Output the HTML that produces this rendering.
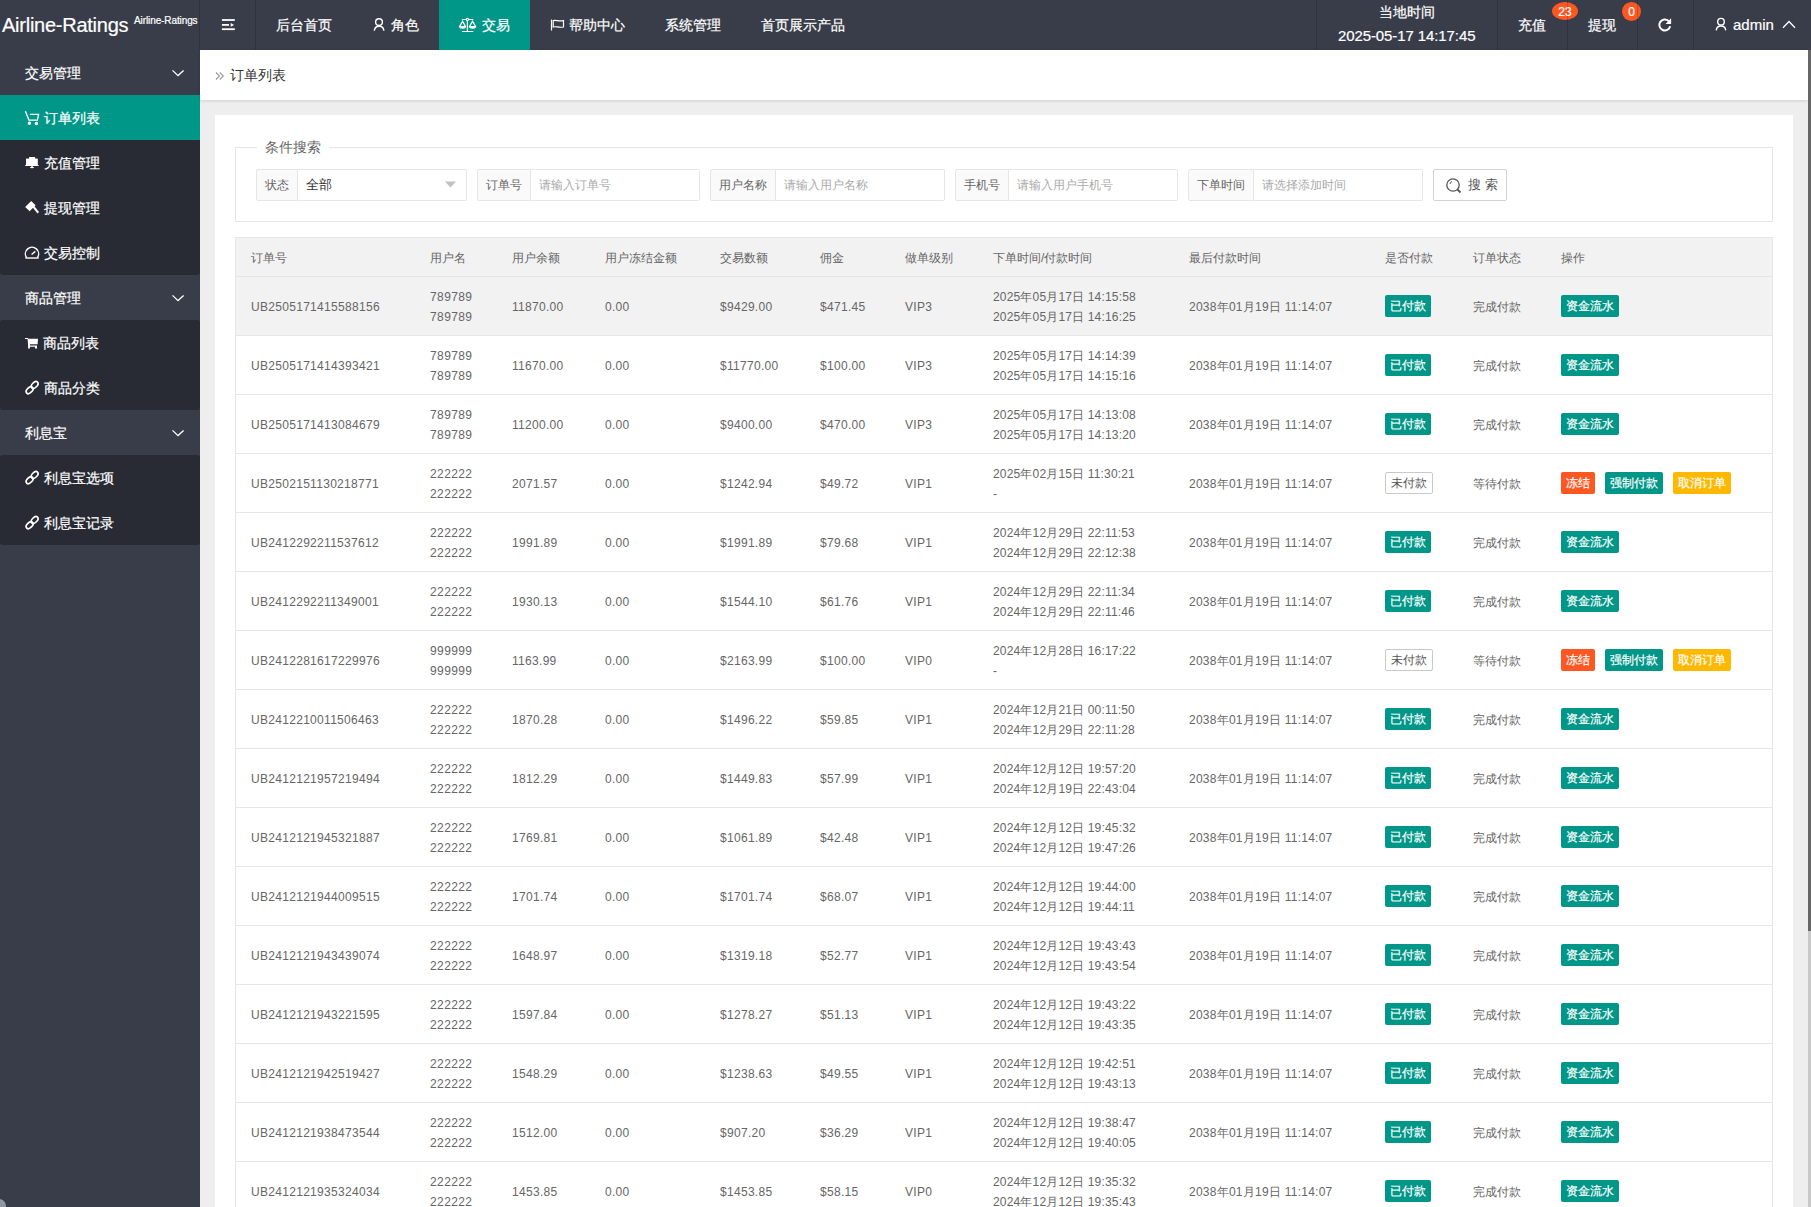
<!DOCTYPE html>
<html><head><meta charset="utf-8"><title>订单列表</title><style>*{margin:0;padding:0;box-sizing:border-box}
html,body{width:1811px;height:1207px;overflow:hidden;background:#eeeeee;font-family:"Liberation Sans",sans-serif;color:#666;font-size:12px}
svg{position:absolute;overflow:visible}
.header{-webkit-text-stroke:0.2px #fff;position:absolute;left:0;top:0;width:1811px;height:50px;background:#393D49;color:#fff}
.big{position:absolute;left:2px;top:13px;font-size:20px;line-height:24px;color:#fff;white-space:nowrap;letter-spacing:-0.25px}
.sm{position:absolute;left:134px;top:15px;font-size:10px;line-height:12px;color:#fff;white-space:nowrap;letter-spacing:-0.1px}
.vl{position:absolute;top:0;width:1px;height:50px;background:rgba(0,0,0,.16)}
.nav{position:absolute;top:0;height:50px;line-height:50px;font-size:14px;color:#fff;white-space:nowrap}
.navact{position:absolute;left:439px;top:0;width:91px;height:50px;background:#009688}
.side{-webkit-text-stroke:0.2px #fff;position:absolute;left:0;top:50px;width:200px;height:1157px;background:#393D49}
.si{position:absolute;left:0;width:200px;height:45px;line-height:45px;color:#fff;font-size:14px;white-space:nowrap}
.si.par{background:#393D49}
.grp{position:absolute;left:0;width:200px;background:#282B33;border-radius:3px}
.si.act{background:#009688}
.si .t{position:absolute;left:25px;top:1px}
.si .ti{position:absolute;left:44px;top:1px}
.bc{position:absolute;left:200px;top:50px;width:1608px;height:50px;background:#fff;box-shadow:0 1px 3px rgba(0,0,0,.13)}
.card{position:absolute;left:215px;top:115px;width:1578px;height:1100px;background:#fff}
.fs{position:absolute;left:235px;top:147px;width:1538px;height:75px;border:1px solid #e6e6e6}
.legend{position:absolute;left:257px;top:138px;padding:0 8px;background:#fff;font-size:14px;color:#666;line-height:18px}
.lab{position:absolute;top:169px;height:32px;line-height:30px;border:1px solid #e6e6e6;border-radius:2px 0 0 2px;background:#fafafa;font-size:12px;color:#666;padding-left:8px;white-space:nowrap}
.inp{position:absolute;top:169px;height:32px;line-height:30px;border:1px solid #e6e6e6;border-left:none;border-radius:0 2px 2px 0;background:#fff;font-size:12px;color:#aaa;padding-left:8px;white-space:nowrap}
.sbtn{position:absolute;left:1433px;top:169px;width:74px;height:32px;border:1px solid #d2d2d2;border-radius:2px;background:#fff;color:#555;font-size:13px;line-height:30px}
.table{position:absolute;left:235px;top:237px;width:1538px;border-left:1px solid #e6e6e6;border-right:1px solid #e6e6e6}
.th{position:relative;height:40px;background:#f2f2f2;border-bottom:1px solid #e6e6e6;border-top:1px solid #e6e6e6}
.th .c{position:absolute;top:1px;line-height:38px;font-size:12px;color:#666;white-space:nowrap}
.tr{position:relative;height:59px;border-bottom:1px solid #e6e6e6;background:#fff}
.tr.hov{background:#f2f2f2}
.tr .c{position:absolute;top:1px;line-height:58px;white-space:nowrap;font-size:12px;color:#666;letter-spacing:0.3px}
.tr .c.cn{letter-spacing:0}
.tr .c.two{line-height:20px;top:10px;letter-spacing:0.17px}
.btn{position:absolute;top:18px;height:22px;line-height:22px;padding:0 5px;font-size:12px;color:#fff;white-space:nowrap;border-radius:2px}
.btn.g,.btn.o,.btn.y{-webkit-text-stroke:0.2px #fff}
.btn.g{background:#009688}
.btn.o{background:#FF5722}
.btn.y{background:#FFB800}
.btn.p{top:195px;background:#fff;color:#555;border:1px solid #c9c9c9;line-height:20px;top:18px;height:22px}
.badge{position:absolute;top:2px;height:18px;line-height:20px;border-radius:50%;background:#FF5722;color:#fff;font-size:12px;text-align:center}
.scroll{position:absolute;left:1808px;top:50px;width:3px;height:1157px;background:#c8c8c8}
.thumb{position:absolute;left:1808px;top:50px;width:3px;height:881px;background:#666}
</style></head>
<body><div class="header">
  <span class="big">Airline-Ratings</span><span class="sm">Airline-Ratings</span>
  <div class="vl" style="left:199px"></div>
  <svg style="left:215px;top:12px" width="30" height="26" viewBox="0 0 30 26"><rect x="6.9" y="7.1" width="12.9" height="1.8" fill="#fff"/><rect x="6.9" y="12" width="7.1" height="1.8" fill="#fff"/><polygon points="15.7,11.1 19.1,12.9 15.7,14.7" fill="#fff"/><rect x="6.9" y="16.3" width="12.9" height="1.8" fill="#fff"/></svg>
  <div class="vl" style="left:255px"></div>
  <div class="navact"></div>
  <div class="nav" style="left:276px">后台首页</div>
  <svg style="left:365px;top:12px" width="30" height="26" viewBox="0 0 30 26" fill="none" stroke="#fff" stroke-width="1.4"><circle cx="14" cy="10.1" r="3.4"/><path d="M9.3 18.8 C9.6 15.6 11.6 14.2 14.1 14.2 C16.6 14.2 18.6 15.6 18.9 18.8"/></svg>
  <div class="nav" style="left:391px">角色</div>
  <svg style="left:452px;top:12px" width="30" height="26" viewBox="0 0 30 26" fill="none" stroke="#fff" stroke-width="1.2"><path d="M9.9 7.5 H14.2 M16.6 7.5 H21.3"/><circle cx="15.4" cy="7.4" r="1.1"/><path d="M15.4 8.5 V19.5 M9.9 19.5 H21.3"/><path d="M7.4 14.9 L10.6 9.3 L13.7 14.9" /><path d="M17.3 14.9 L20.6 9.3 L23.8 14.9"/><path d="M7.3 14.6 H13.8 C13.8 16.9 7.3 16.9 7.3 14.6 Z" fill="#fff" stroke-width="1"/><path d="M17.3 14.6 H23.8 C23.8 16.9 17.3 16.9 17.3 14.6 Z" fill="#fff" stroke-width="1"/></svg>
  <div class="nav" style="left:482px">交易</div>
  <svg style="left:543px;top:12px" width="30" height="26" viewBox="0 0 30 26" fill="none" stroke="#fff" stroke-width="1.2"><path d="M8.5 7.6 V18.5"/><path d="M10.2 8.6 C13 7.6 15.5 9.6 20.5 8.6 V15 C15.5 16 13 14 10.2 15 Z"/></svg>
  <div class="nav" style="left:569px">帮助中心</div>
  <div class="nav" style="left:665px">系统管理</div>
  <div class="nav" style="left:761px">首页展示产品</div>
  <div class="vl" style="left:1316px"></div>
  <div class="nav" style="left:1379px;top:0;line-height:24px;font-size:14px">当地时间</div>
  <div class="nav" style="left:1338px;top:26px;line-height:20px;font-size:15px;letter-spacing:-0.1px">2025-05-17 14:17:45</div>
  <div class="vl" style="left:1497px"></div>
  <div class="nav" style="left:1518px">充值</div>
  <span class="badge" style="left:1552px;width:26px">23</span>
  <div class="vl" style="left:1567px"></div>
  <div class="nav" style="left:1588px">提现</div>
  <span class="badge" style="left:1622px;width:19px;height:19px">0</span>
  <div class="vl" style="left:1637px"></div>
  <svg style="left:1650px;top:12px" width="30" height="26" viewBox="0 0 30 26" fill="none" stroke="#fff" stroke-width="2"><path d="M20.2 14.2 A5.5 5.5 0 1 1 18.6 8.9"/><polygon points="21.1,6.2 21.1,11.9 15.6,11.9" fill="#fff" stroke="none"/></svg>
  <div class="vl" style="left:1693px"></div>
  <svg style="left:1705px;top:10px" width="30" height="30" viewBox="0 0 30 30" fill="none" stroke="#fff" stroke-width="1.4"><circle cx="16" cy="11.7" r="3.3"/><path d="M11.3 20.4 C11.5 17.4 13.3 16 16 16 C18.7 16 20.5 17.4 20.7 20.4"/></svg>
  <div class="nav" style="left:1733px;font-size:15px;top:0">admin</div>
  <svg style="left:1780px;top:18px" width="18" height="14" viewBox="0 0 18 14" fill="none" stroke="#fff" stroke-width="1.3"><path d="M3 9.7 L9 3.5 L15 9.7"/></svg>
</div>
<div class="side">
  <div class="si par" style="top:0"><span class="t">交易管理</span></div>
  <svg style="left:165px;top:10px" width="25" height="25" viewBox="0 0 25 25" fill="none" stroke="#fff" stroke-width="1.3"><path d="M7.5 10.4 L13 15.6 L18.6 10.4"/></svg>
  <div class="grp" style="top:45px;height:180px"></div>
  <div class="si act" style="top:45px"><span class="ti">订单列表</span></div>
  <svg style="left:20px;top:55px" width="25" height="25" viewBox="0 0 25 25" fill="none" stroke="#fff" stroke-width="1.3"><path d="M5.4 6.2 L8.9 15.1 H17.4 L18.6 9.4 H10"/><circle cx="9.4" cy="18.2" r="1.1" fill="#fff"/><circle cx="16.4" cy="18.4" r="1.1" fill="#fff"/></svg>
  <div class="si" style="top:90px"><span class="ti">充值管理</span></div>
  <svg style="left:20px;top:100px" width="25" height="25" viewBox="0 0 25 25" fill="#fff"><rect x="9.1" y="7" width="6" height="2"/><rect x="6" y="8.6" width="11.8" height="6.6"/><rect x="5.2" y="15" width="13.4" height="1"/><rect x="11.3" y="15.5" width="1.4" height="1.6"/><ellipse cx="12" cy="17.6" rx="2.1" ry="0.75"/></svg>
  <div class="si" style="top:135px"><span class="ti">提现管理</span></div>
  <svg style="left:20px;top:145px" width="25" height="25" viewBox="0 0 25 25" fill="#fff"><polygon points="11.2,5.9 15.6,10.3 9.6,16.3 5.2,11.9"/><polygon points="12.3,12 13.8,10.5 19,16.9 17.5,18.4" /></svg>
  <div class="si" style="top:180px"><span class="ti">交易控制</span></div>
  <svg style="left:20px;top:190px" width="25" height="25" viewBox="0 0 25 25" fill="none" stroke="#fff" stroke-width="1.4"><path d="M6.5 17.5 A6.6 6.6 0 1 1 17.5 17.5"/><path d="M5.3 18 H18.7"/><path d="M11.6 14.5 L15.3 11.4"/></svg>
  <div class="si par" style="top:225px"><span class="t">商品管理</span></div>
  <svg style="left:165px;top:235px" width="25" height="25" viewBox="0 0 25 25" fill="none" stroke="#fff" stroke-width="1.3"><path d="M7.5 10.4 L13 15.6 L18.6 10.4"/></svg>
  <div class="grp" style="top:270px;height:90px"></div>
  <div class="si" style="top:270px"><span class="ti" style="left:43px">商品列表</span></div>
  <svg style="left:20px;top:280px" width="25" height="25" viewBox="0 0 25 25" fill="#fff"><path d="M5 8 H7.9 L8.4 8.8 H18 L17.6 14.3 H9.9 V15.6 H17 V18.6 H15 V16.7 H9.9 V18.6 H8.1 V15.6 L7.6 9 H5 Z"/></svg>
  <div class="si" style="top:315px"><span class="ti">商品分类</span></div>
  <svg style="left:20px;top:325px" width="25" height="25" viewBox="0 0 25 25" fill="none" stroke="#fff" stroke-width="1.7"><ellipse cx="9.6" cy="15.2" rx="4.1" ry="2.5" transform="rotate(-45 9.6 15.2)"/><ellipse cx="14.6" cy="10" rx="4.1" ry="2.5" transform="rotate(-45 14.6 10)"/></svg>
  <div class="si par" style="top:360px"><span class="t">利息宝</span></div>
  <svg style="left:165px;top:370px" width="25" height="25" viewBox="0 0 25 25" fill="none" stroke="#fff" stroke-width="1.3"><path d="M7.5 10.4 L13 15.6 L18.6 10.4"/></svg>
  <div class="grp" style="top:405px;height:90px"></div>
  <div class="si" style="top:405px"><span class="ti">利息宝选项</span></div>
  <svg style="left:20px;top:415px" width="25" height="25" viewBox="0 0 25 25" fill="none" stroke="#fff" stroke-width="1.7"><ellipse cx="9.6" cy="15.2" rx="4.1" ry="2.5" transform="rotate(-45 9.6 15.2)"/><ellipse cx="14.6" cy="10" rx="4.1" ry="2.5" transform="rotate(-45 14.6 10)"/></svg>
  <div class="si" style="top:450px"><span class="ti">利息宝记录</span></div>
  <svg style="left:20px;top:460px" width="25" height="25" viewBox="0 0 25 25" fill="none" stroke="#fff" stroke-width="1.7"><ellipse cx="9.6" cy="15.2" rx="4.1" ry="2.5" transform="rotate(-45 9.6 15.2)"/><ellipse cx="14.6" cy="10" rx="4.1" ry="2.5" transform="rotate(-45 14.6 10)"/></svg>
  <div style="position:absolute;left:-8px;top:1149px;width:14px;height:14px;border-radius:50%;background:#8e98a3"></div>
</div>
<div class="bc">
  <svg style="left:13px;top:20px" width="14" height="14" viewBox="0 0 14 14" fill="none" stroke="#999" stroke-width="1.1"><path d="M3 2.5 L6.5 6 L3 9.5 M6.8 2.5 L10.3 6 L6.8 9.5"/></svg>
  <span style="position:absolute;left:30px;top:15px;color:#333;font-size:14px;line-height:20px">订单列表</span>
</div>
<div class="card"></div>
<div class="fs"></div>
<div class="legend">条件搜索</div>
<div class="lab" style="left:256px;width:42px">状态</div>
<div class="inp" style="left:298px;width:169px;color:#333;font-size:13px">全部</div>
<svg style="left:440px;top:178px" width="20" height="14" viewBox="0 0 20 14"><polygon points="5,3.6 16,3.6 10.5,9.6" fill="#c2c2c2"/></svg>
<div class="lab" style="left:477px;width:54px">订单号</div>
<div class="inp" style="left:531px;width:169px">请输入订单号</div>
<div class="lab" style="left:710px;width:66px">用户名称</div>
<div class="inp" style="left:776px;width:169px">请输入用户名称</div>
<div class="lab" style="left:955px;width:54px">手机号</div>
<div class="inp" style="left:1009px;width:169px">请输入用户手机号</div>
<div class="lab" style="left:1188px;width:66px">下单时间</div>
<div class="inp" style="left:1254px;width:169px">请选择添加时间</div>
<div class="sbtn">
  <svg style="left:10px;top:6px" width="20" height="20" viewBox="0 0 20 20" fill="none" stroke="#555" stroke-width="1.3"><circle cx="9" cy="9" r="6.2"/><path d="M13.5 13.5 L16.5 16.5" stroke-width="1.8"/><path d="M6 8 A3 3 0 0 1 8 5.5" stroke-width="1"/></svg>
  <span style="position:absolute;left:34px;top:0">搜 索</span>
</div>
<div class="table"><div class="th"><span class="c" style="left:15px">订单号</span><span class="c" style="left:194px">用户名</span><span class="c" style="left:276px">用户余额</span><span class="c" style="left:369px">用户冻结金额</span><span class="c" style="left:484px">交易数额</span><span class="c" style="left:584px">佣金</span><span class="c" style="left:669px">做单级别</span><span class="c" style="left:757px">下单时间/付款时间</span><span class="c" style="left:953px">最后付款时间</span><span class="c" style="left:1149px">是否付款</span><span class="c" style="left:1237px">订单状态</span><span class="c" style="left:1325px">操作</span></div><div class="tr hov"><span class="c" style="left:15px">UB2505171415588156</span><span class="c two" style="left:194px;letter-spacing:0.4px">789789<br>789789</span><span class="c" style="left:276px">11870.00</span><span class="c" style="left:369px">0.00</span><span class="c" style="left:484px">$9429.00</span><span class="c" style="left:584px">$471.45</span><span class="c" style="left:669px">VIP3</span><span class="c two" style="left:757px">2025年05月17日 14:15:58<br>2025年05月17日 14:16:25</span><span class="c" style="left:953px;letter-spacing:0.25px">2038年01月19日 11:14:07</span><span class="btn g" style="left:1149px">已付款</span><span class="c cn" style="left:1237px">完成付款</span><span class="btn g" style="left:1325px">资金流水</span></div><div class="tr"><span class="c" style="left:15px">UB2505171414393421</span><span class="c two" style="left:194px;letter-spacing:0.4px">789789<br>789789</span><span class="c" style="left:276px">11670.00</span><span class="c" style="left:369px">0.00</span><span class="c" style="left:484px">$11770.00</span><span class="c" style="left:584px">$100.00</span><span class="c" style="left:669px">VIP3</span><span class="c two" style="left:757px">2025年05月17日 14:14:39<br>2025年05月17日 14:15:16</span><span class="c" style="left:953px;letter-spacing:0.25px">2038年01月19日 11:14:07</span><span class="btn g" style="left:1149px">已付款</span><span class="c cn" style="left:1237px">完成付款</span><span class="btn g" style="left:1325px">资金流水</span></div><div class="tr"><span class="c" style="left:15px">UB2505171413084679</span><span class="c two" style="left:194px;letter-spacing:0.4px">789789<br>789789</span><span class="c" style="left:276px">11200.00</span><span class="c" style="left:369px">0.00</span><span class="c" style="left:484px">$9400.00</span><span class="c" style="left:584px">$470.00</span><span class="c" style="left:669px">VIP3</span><span class="c two" style="left:757px">2025年05月17日 14:13:08<br>2025年05月17日 14:13:20</span><span class="c" style="left:953px;letter-spacing:0.25px">2038年01月19日 11:14:07</span><span class="btn g" style="left:1149px">已付款</span><span class="c cn" style="left:1237px">完成付款</span><span class="btn g" style="left:1325px">资金流水</span></div><div class="tr"><span class="c" style="left:15px">UB2502151130218771</span><span class="c two" style="left:194px;letter-spacing:0.4px">222222<br>222222</span><span class="c" style="left:276px">2071.57</span><span class="c" style="left:369px">0.00</span><span class="c" style="left:484px">$1242.94</span><span class="c" style="left:584px">$49.72</span><span class="c" style="left:669px">VIP1</span><span class="c two" style="left:757px">2025年02月15日 11:30:21<br>-</span><span class="c" style="left:953px;letter-spacing:0.25px">2038年01月19日 11:14:07</span><span class="btn p" style="left:1149px">未付款</span><span class="c cn" style="left:1237px">等待付款</span><span class="btn o" style="left:1325px">冻结</span><span class="btn g" style="left:1369px">强制付款</span><span class="btn y" style="left:1437px">取消订单</span></div><div class="tr"><span class="c" style="left:15px">UB2412292211537612</span><span class="c two" style="left:194px;letter-spacing:0.4px">222222<br>222222</span><span class="c" style="left:276px">1991.89</span><span class="c" style="left:369px">0.00</span><span class="c" style="left:484px">$1991.89</span><span class="c" style="left:584px">$79.68</span><span class="c" style="left:669px">VIP1</span><span class="c two" style="left:757px">2024年12月29日 22:11:53<br>2024年12月29日 22:12:38</span><span class="c" style="left:953px;letter-spacing:0.25px">2038年01月19日 11:14:07</span><span class="btn g" style="left:1149px">已付款</span><span class="c cn" style="left:1237px">完成付款</span><span class="btn g" style="left:1325px">资金流水</span></div><div class="tr"><span class="c" style="left:15px">UB2412292211349001</span><span class="c two" style="left:194px;letter-spacing:0.4px">222222<br>222222</span><span class="c" style="left:276px">1930.13</span><span class="c" style="left:369px">0.00</span><span class="c" style="left:484px">$1544.10</span><span class="c" style="left:584px">$61.76</span><span class="c" style="left:669px">VIP1</span><span class="c two" style="left:757px">2024年12月29日 22:11:34<br>2024年12月29日 22:11:46</span><span class="c" style="left:953px;letter-spacing:0.25px">2038年01月19日 11:14:07</span><span class="btn g" style="left:1149px">已付款</span><span class="c cn" style="left:1237px">完成付款</span><span class="btn g" style="left:1325px">资金流水</span></div><div class="tr"><span class="c" style="left:15px">UB2412281617229976</span><span class="c two" style="left:194px;letter-spacing:0.4px">999999<br>999999</span><span class="c" style="left:276px">1163.99</span><span class="c" style="left:369px">0.00</span><span class="c" style="left:484px">$2163.99</span><span class="c" style="left:584px">$100.00</span><span class="c" style="left:669px">VIP0</span><span class="c two" style="left:757px">2024年12月28日 16:17:22<br>-</span><span class="c" style="left:953px;letter-spacing:0.25px">2038年01月19日 11:14:07</span><span class="btn p" style="left:1149px">未付款</span><span class="c cn" style="left:1237px">等待付款</span><span class="btn o" style="left:1325px">冻结</span><span class="btn g" style="left:1369px">强制付款</span><span class="btn y" style="left:1437px">取消订单</span></div><div class="tr"><span class="c" style="left:15px">UB2412210011506463</span><span class="c two" style="left:194px;letter-spacing:0.4px">222222<br>222222</span><span class="c" style="left:276px">1870.28</span><span class="c" style="left:369px">0.00</span><span class="c" style="left:484px">$1496.22</span><span class="c" style="left:584px">$59.85</span><span class="c" style="left:669px">VIP1</span><span class="c two" style="left:757px">2024年12月21日 00:11:50<br>2024年12月29日 22:11:28</span><span class="c" style="left:953px;letter-spacing:0.25px">2038年01月19日 11:14:07</span><span class="btn g" style="left:1149px">已付款</span><span class="c cn" style="left:1237px">完成付款</span><span class="btn g" style="left:1325px">资金流水</span></div><div class="tr"><span class="c" style="left:15px">UB2412121957219494</span><span class="c two" style="left:194px;letter-spacing:0.4px">222222<br>222222</span><span class="c" style="left:276px">1812.29</span><span class="c" style="left:369px">0.00</span><span class="c" style="left:484px">$1449.83</span><span class="c" style="left:584px">$57.99</span><span class="c" style="left:669px">VIP1</span><span class="c two" style="left:757px">2024年12月12日 19:57:20<br>2024年12月19日 22:43:04</span><span class="c" style="left:953px;letter-spacing:0.25px">2038年01月19日 11:14:07</span><span class="btn g" style="left:1149px">已付款</span><span class="c cn" style="left:1237px">完成付款</span><span class="btn g" style="left:1325px">资金流水</span></div><div class="tr"><span class="c" style="left:15px">UB2412121945321887</span><span class="c two" style="left:194px;letter-spacing:0.4px">222222<br>222222</span><span class="c" style="left:276px">1769.81</span><span class="c" style="left:369px">0.00</span><span class="c" style="left:484px">$1061.89</span><span class="c" style="left:584px">$42.48</span><span class="c" style="left:669px">VIP1</span><span class="c two" style="left:757px">2024年12月12日 19:45:32<br>2024年12月12日 19:47:26</span><span class="c" style="left:953px;letter-spacing:0.25px">2038年01月19日 11:14:07</span><span class="btn g" style="left:1149px">已付款</span><span class="c cn" style="left:1237px">完成付款</span><span class="btn g" style="left:1325px">资金流水</span></div><div class="tr"><span class="c" style="left:15px">UB2412121944009515</span><span class="c two" style="left:194px;letter-spacing:0.4px">222222<br>222222</span><span class="c" style="left:276px">1701.74</span><span class="c" style="left:369px">0.00</span><span class="c" style="left:484px">$1701.74</span><span class="c" style="left:584px">$68.07</span><span class="c" style="left:669px">VIP1</span><span class="c two" style="left:757px">2024年12月12日 19:44:00<br>2024年12月12日 19:44:11</span><span class="c" style="left:953px;letter-spacing:0.25px">2038年01月19日 11:14:07</span><span class="btn g" style="left:1149px">已付款</span><span class="c cn" style="left:1237px">完成付款</span><span class="btn g" style="left:1325px">资金流水</span></div><div class="tr"><span class="c" style="left:15px">UB2412121943439074</span><span class="c two" style="left:194px;letter-spacing:0.4px">222222<br>222222</span><span class="c" style="left:276px">1648.97</span><span class="c" style="left:369px">0.00</span><span class="c" style="left:484px">$1319.18</span><span class="c" style="left:584px">$52.77</span><span class="c" style="left:669px">VIP1</span><span class="c two" style="left:757px">2024年12月12日 19:43:43<br>2024年12月12日 19:43:54</span><span class="c" style="left:953px;letter-spacing:0.25px">2038年01月19日 11:14:07</span><span class="btn g" style="left:1149px">已付款</span><span class="c cn" style="left:1237px">完成付款</span><span class="btn g" style="left:1325px">资金流水</span></div><div class="tr"><span class="c" style="left:15px">UB2412121943221595</span><span class="c two" style="left:194px;letter-spacing:0.4px">222222<br>222222</span><span class="c" style="left:276px">1597.84</span><span class="c" style="left:369px">0.00</span><span class="c" style="left:484px">$1278.27</span><span class="c" style="left:584px">$51.13</span><span class="c" style="left:669px">VIP1</span><span class="c two" style="left:757px">2024年12月12日 19:43:22<br>2024年12月12日 19:43:35</span><span class="c" style="left:953px;letter-spacing:0.25px">2038年01月19日 11:14:07</span><span class="btn g" style="left:1149px">已付款</span><span class="c cn" style="left:1237px">完成付款</span><span class="btn g" style="left:1325px">资金流水</span></div><div class="tr"><span class="c" style="left:15px">UB2412121942519427</span><span class="c two" style="left:194px;letter-spacing:0.4px">222222<br>222222</span><span class="c" style="left:276px">1548.29</span><span class="c" style="left:369px">0.00</span><span class="c" style="left:484px">$1238.63</span><span class="c" style="left:584px">$49.55</span><span class="c" style="left:669px">VIP1</span><span class="c two" style="left:757px">2024年12月12日 19:42:51<br>2024年12月12日 19:43:13</span><span class="c" style="left:953px;letter-spacing:0.25px">2038年01月19日 11:14:07</span><span class="btn g" style="left:1149px">已付款</span><span class="c cn" style="left:1237px">完成付款</span><span class="btn g" style="left:1325px">资金流水</span></div><div class="tr"><span class="c" style="left:15px">UB2412121938473544</span><span class="c two" style="left:194px;letter-spacing:0.4px">222222<br>222222</span><span class="c" style="left:276px">1512.00</span><span class="c" style="left:369px">0.00</span><span class="c" style="left:484px">$907.20</span><span class="c" style="left:584px">$36.29</span><span class="c" style="left:669px">VIP1</span><span class="c two" style="left:757px">2024年12月12日 19:38:47<br>2024年12月12日 19:40:05</span><span class="c" style="left:953px;letter-spacing:0.25px">2038年01月19日 11:14:07</span><span class="btn g" style="left:1149px">已付款</span><span class="c cn" style="left:1237px">完成付款</span><span class="btn g" style="left:1325px">资金流水</span></div><div class="tr"><span class="c" style="left:15px">UB2412121935324034</span><span class="c two" style="left:194px;letter-spacing:0.4px">222222<br>222222</span><span class="c" style="left:276px">1453.85</span><span class="c" style="left:369px">0.00</span><span class="c" style="left:484px">$1453.85</span><span class="c" style="left:584px">$58.15</span><span class="c" style="left:669px">VIP0</span><span class="c two" style="left:757px">2024年12月12日 19:35:32<br>2024年12月12日 19:35:43</span><span class="c" style="left:953px;letter-spacing:0.25px">2038年01月19日 11:14:07</span><span class="btn g" style="left:1149px">已付款</span><span class="c cn" style="left:1237px">完成付款</span><span class="btn g" style="left:1325px">资金流水</span></div></div>
<div class="scroll"></div><div class="thumb"></div>
</body></html>
